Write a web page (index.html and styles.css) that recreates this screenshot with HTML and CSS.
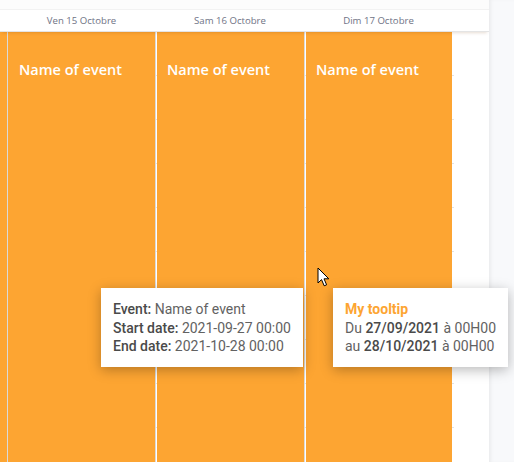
FILE: index.html
```html
<!DOCTYPE html>
<html lang="fr">
<head>
<meta charset="utf-8">
<link rel="stylesheet" href="styles.css">
</head>
<body>
<div class="page">
  <div class="main">
    <div class="topbar"></div>
    <div class="header">
      <div class="hcell hcell-edge"></div>
      <div class="hcell">Ven 15 Octobre</div>
      <div class="hcell">Sam 16 Octobre</div>
      <div class="hcell">Dim 17 Octobre</div>
      <div class="hcell"></div>
    </div>
    <div class="grid">
      <div class="col col-edge"><div class="event"></div></div>
      <div class="col"><div class="event"><span class="title">Name of event</span></div></div>
      <div class="col"><div class="event"><span class="title">Name of event</span></div></div>
      <div class="col"><div class="event"><span class="title">Name of event</span></div></div>
      <div class="col col-rest"></div>

      <div class="tooltip tip-a">
        <div><b>Event:</b> Name of event</div>
        <div><b>Start date:</b> 2021-09-27 00:00</div>
        <div><b>End date:</b> 2021-10-28 00:00</div>
      </div>
      <div class="tooltip tip-b">
        <div class="tip-title">My tooltip</div>
        <div>Du <b>27/09/2021</b> à 00H00</div>
        <div>au <b>28/10/2021</b> à 00H00</div>
      </div>
      <svg class="cursor" width="13" height="21" viewBox="0 0 13 21">
        <path d="M1 1 L1 16 L4.5 12.6 L7.2 18.8 L9.6 17.8 L7 11.8 L11.8 11.8 Z" fill="#fff" stroke="#000" stroke-width="1" stroke-linejoin="round"/>
      </svg>
    </div>
  </div>
  <div class="side"></div>
</div>
</body>
</html>
```
FILE: styles.css
```css
html, body {
  margin: 0;
  padding: 0;
  background: #ffffff;
}
.page {
  display: flex;
  width: 514px;
  height: 462px;
  overflow: hidden;
}
.main {
  width: 489px;
  display: flex;
  flex-direction: column;
  background: #fff;
  position: relative;
  z-index: 1;
}
.side {
  flex: 1;
  background: #f8f9fb;
  box-shadow: inset 3px 0 4px -2px rgba(0,0,0,0.08);
}
.topbar {
  height: 9px;
  background: #fcfcfc;
  border-bottom: 1px solid #f2f2f2;
}
.header {
  display: grid;
  grid-template-columns: 7px 148px 149px 148px 1fr;
  height: 21px;
  border-bottom: 1px solid #e4e4e4;
  position: relative;
  z-index: 2;
  box-shadow: 0 3px 3px -2px rgba(120,60,0,0.18);
  background: #fff;
}
.hcell {
  font-family: "Open Sans", "DejaVu Sans", sans-serif;
  font-size: 9.6px;
  color: #6f7386;
  text-align: center;
  line-height: 21px;
  padding-left: 1px;
}
.grid {
  flex: 1;
  position: relative;
  display: grid;
  grid-template-columns: 7px 148px 149px 148px 1fr;
  background-image: repeating-linear-gradient(to bottom, transparent 0, transparent 43px, #e2e2e2 43px, #e2e2e2 44px);
}
.col {
  border-left: 1px solid #dadada;
  display: flex;
}
.col-edge {
  border-left: none;
}
.col-edge .event {
  margin-left: 0;
}
.col-rest {
  border-left: none;
  background: #fff;
  margin-left: 2px;
}
.event {
  flex: 1;
  margin-left: 1px;
  background: #fda532;
  padding: 29px 0 0 10px;
}
.title {
  font-family: "Open Sans", "DejaVu Sans", sans-serif;
  font-weight: 600;
  font-size: 14.5px;
  color: #fff;
  line-height: 18px;
}
.tooltip {
  position: absolute;
  top: 256px;
  z-index: 5;
  background: #fff;
  box-shadow: 0 3px 12px rgba(0,0,0,0.28);
  font-family: Roboto, "Liberation Sans", sans-serif;
  font-size: 14px;
  line-height: 18.5px;
  color: #626262;
  padding: 12px 12px 11px 12px;
  white-space: nowrap;
}
.tooltip b {
  font-weight: 500;
  color: #4a4a4a;
}
.tip-a {
  left: 101px;
  width: 178px;
}
.tip-b {
  left: 333px;
  width: 151px;
}
.tip-title {
  color: #fda532;
  font-weight: 700;
}
.cursor {
  position: absolute;
  left: 317px;
  top: 235px;
}
```
